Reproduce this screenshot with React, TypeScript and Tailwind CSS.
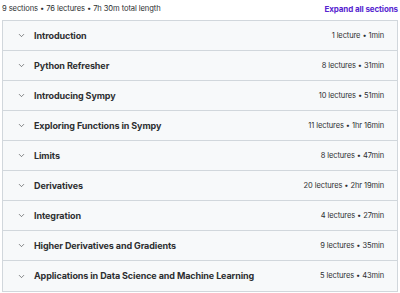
import { ChevronDown } from "lucide-react";

interface Section {
  title: string;
  lectures: number;
  length: string;
}

const sections: Section[] = [
  { title: "Introduction", lectures: 1, length: "1min" },
  { title: "Python Refresher", lectures: 8, length: "31min" },
  { title: "Introducing Sympy", lectures: 10, length: "51min" },
  { title: "Exploring Functions in Sympy", lectures: 11, length: "1hr 16min" },
  { title: "Limits", lectures: 8, length: "47min" },
  { title: "Derivatives", lectures: 20, length: "2hr 19min" },
  { title: "Integration", lectures: 4, length: "27min" },
  { title: "Higher Derivatives and Gradients", lectures: 9, length: "35min" },
  { title: "Applications in Data Science and Machine Learning", lectures: 5, length: "43min" },
];

const App = () => {
  return (
    <div className="w-[400px] h-[293px] bg-white px-[2px] pt-[2px] font-['Inter',sans-serif] text-[#2d2f31]">
      {/* Summary */}
      <div className="flex items-center justify-between h-[14px] mb-[4px]">
        <span className="text-[7.6px] tracking-[-0.1px]">
          9 sections • 76 lectures • 7h 30m total length
        </span>
        <button className="text-[8px] font-bold text-[#5624d0] tracking-[-0.1px]">
          Expand all sections
        </button>
      </div>

      {/* Curriculum list */}
      <div className="border border-[#d1d7dc]">
        {sections.map((s, i) => (
          <div
            key={i}
            className="flex items-center justify-between h-[30px] bg-[#f7f9fa] border-b border-[#d1d7dc] last:border-b-0 pl-[14px] pr-[13px]"
          >
            <div className="flex items-center gap-[8px]">
              <ChevronDown size={9} strokeWidth={1.5} className="text-[#2d2f31]" />
              <span className="text-[9px] font-bold tracking-[-0.1px]">{s.title}</span>
            </div>
            <span className="text-[7.5px] tracking-[-0.1px]">
              {s.lectures} {s.lectures === 1 ? "lecture" : "lectures"} • {s.length}
            </span>
          </div>
        ))}
      </div>
    </div>
  );
};

export default App;
